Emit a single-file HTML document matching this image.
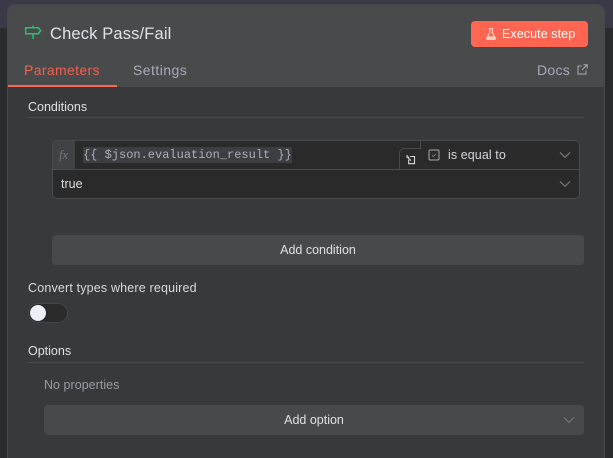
<!DOCTYPE html>
<html><head><meta charset="utf-8"><style>
html,body{margin:0;padding:0;width:613px;height:458px;overflow:hidden;background:#2a2b2d;font-family:"Liberation Sans",sans-serif}
body{position:relative}
div,span,svg{position:absolute;box-sizing:border-box}
.t{white-space:nowrap;line-height:16px}
</style></head><body>
<div style="left:0;top:0;width:613px;height:28px;background:#3b3947"></div>
<div style="left:7px;top:4px;width:598px;height:454px;background:#38393b;border-radius:8px 8px 0 0;border:1px solid #47484a;border-bottom:0;overflow:hidden">
<div style="left:0;top:0;width:596px;height:82px;background:#494a4c"></div>
</div>
<svg style="left:24px;top:23px" width="18" height="18" viewBox="0 0 18 18" fill="none" stroke="#2fbf68" stroke-width="1.5"><path d="M1.7 4.7H14.3L16.6 7.7L14.3 10.8H1.7Z"/><path d="M9 2.5V4.7M9 10.8V16"/></svg>
<div class="t" style="left:50px;top:24px;font-size:16.5px;line-height:20px;letter-spacing:.15px;color:#e2e3e8">Check Pass/Fail</div>
<div style="left:471px;top:21px;width:117px;height:26px;background:#ff6550;border-radius:4px"></div>
<svg style="left:484px;top:27px" width="14" height="14" viewBox="0 0 14 14" fill="none" stroke="#ffd9d2" stroke-width="1.1"><path d="M5 1.5H9M5.7 1.5V5.5L2.8 11Q2.4 12.3 3.5 12.3H10.5Q11.6 12.3 11.2 11L8.3 5.5V1.5"/><path d="M3.4 9.5H10.6L11 11.8H3Z" fill="#ffd9d2" stroke="none"/></svg>
<div class="t" style="left:502px;top:26px;font-size:12.5px;letter-spacing:.08px;color:#fff">Execute step</div>
<div class="t" style="left:24px;top:62px;font-size:14px;letter-spacing:.35px;color:#f0614f">Parameters</div>
<div style="left:8px;top:85px;width:109px;height:2px;background:#ff6550"></div>
<div class="t" style="left:133px;top:62px;font-size:14px;letter-spacing:.45px;color:#a8acb8">Settings</div>
<div class="t" style="left:537px;top:62px;font-size:14px;letter-spacing:.3px;color:#a8acb8">Docs</div>
<svg style="left:577px;top:64px" width="11" height="11" viewBox="0 0 11 11" fill="none" stroke="#a8acb8" stroke-width="1"><path d="M4.5 2H1V10H9V6.5M6.5 .8H10.2V4.5M10 1L5 6"/></svg>

<div class="t" style="left:28px;top:99px;font-size:12.5px;color:#dfe0e5">Conditions</div>
<div style="left:28px;top:117px;width:556px;height:1px;background:#4b4c4e"></div>

<div style="left:52px;top:140px;width:528px;height:59px;background:#2a2a2b;border:1px solid #4a4b4d;border-radius:5px;overflow:hidden">
<div style="left:0;top:0;width:22px;height:28px;background:#414244"></div>
<div style="left:0;top:28px;width:526px;height:1px;background:#4a4b4d"></div>
<div style="left:367px;top:0;width:1px;height:28px;background:#4a4b4d"></div>
</div>
<div class="t" style="left:59px;top:147px;font-size:12.5px;font-family:'Liberation Serif',serif;font-style:italic;color:#77787c">fx</div>
<div class="t" style="left:83px;top:147px;height:16px;font-family:'Liberation Mono',monospace;font-size:12px;color:#aeb0b7;background:#3d3e42">{{ $json.evaluation_result }}</div>
<div style="left:399px;top:148px;width:22px;height:21px;border:1px solid #4a4b4d;border-bottom:0;border-right:0;border-radius:5px 0 0 0;background:#2a2a2b"></div>
<svg style="left:405px;top:154px" width="11" height="11" viewBox="0 0 11 11" fill="none" stroke="#dcdde1" stroke-width="1.1"><path d="M2 1V3.2H4.2M2.2 3L6 6.6M5.2 2.5H9.5V9.7H3.7V5.8"/></svg>
<svg style="left:428px;top:149px" width="12" height="12" viewBox="0 0 12 12" fill="none"><rect x="1" y="1" width="10" height="10" rx="1.2" stroke="#a9abb2"/><path d="M4 6.3L5.4 7.6L8 4.8" stroke="#77787c"/></svg>
<div class="t" style="left:448px;top:147px;font-size:12.5px;letter-spacing:.08px;color:#d4d5d9">is equal to</div>
<svg style="left:559px;top:151px" width="12" height="8" viewBox="0 0 12 8" fill="none" stroke="#77787c" stroke-width="1.2"><path d="M1 1.5L6 6.3L11 1.5"/></svg>
<div class="t" style="left:61px;top:176px;font-size:12.5px;color:#dcdde1">true</div>
<svg style="left:559px;top:180px" width="12" height="8" viewBox="0 0 12 8" fill="none" stroke="#77787c" stroke-width="1.2"><path d="M1 1.5L6 6.3L11 1.5"/></svg>

<div style="left:52px;top:235px;width:532px;height:30px;background:#48494b;border-radius:4px"></div>
<div class="t" style="left:52px;top:242px;width:532px;text-align:center;font-size:12.5px;color:#dfe0e5">Add condition</div>

<div class="t" style="left:28px;top:280px;font-size:12.5px;letter-spacing:.17px;color:#d8d9dd">Convert types where required</div>
<div style="left:28px;top:303px;width:40px;height:20px;border-radius:10px;background:#2a2a2b;border:1px solid #444547"></div>
<div style="left:30px;top:305px;width:16px;height:16px;border-radius:50%;background:#eceef8"></div>

<div class="t" style="left:28px;top:343px;font-size:12.5px;color:#dfe0e5">Options</div>
<div style="left:28px;top:362px;width:556px;height:1px;background:#4b4c4e"></div>
<div class="t" style="left:44px;top:377px;font-size:12.5px;letter-spacing:.03px;color:#9a9ca3">No properties</div>
<div style="left:44px;top:405px;width:540px;height:30px;background:#48494b;border-radius:4px"></div>
<div class="t" style="left:44px;top:412px;width:540px;text-align:center;font-size:12.5px;color:#dfe0e5">Add option</div>
<svg style="left:563px;top:416px" width="12" height="8" viewBox="0 0 12 8" fill="none" stroke="#77787c" stroke-width="1.2"><path d="M1 1.5L6 6.3L11 1.5"/></svg>
</body></html>
